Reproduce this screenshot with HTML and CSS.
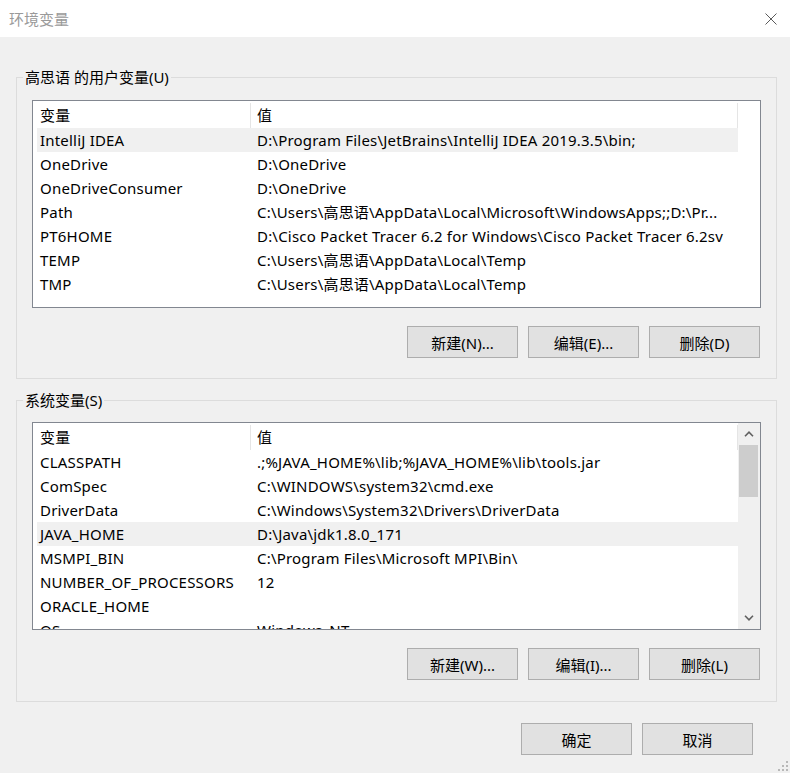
FILE: index.html
```html
<!DOCTYPE html>
<html lang="zh-CN">
<head>
    <meta charset="UTF-8">
    <meta name="viewport" content="width=device-width, initial-scale=1.0">
    <title>环境变量</title>
    <link rel="stylesheet" href="styles.css">
</head>
<body>
    <div class="dialog">
        <div class="titlebar">
            <span class="title">环境变量</span>
            <span class="close">
                <svg width="12" height="12" viewBox="0 0 12 12"><path d="M0.5 0.5L11.5 11.5M11.5 0.5L0.5 11.5" stroke="#5a5a5a" stroke-width="1" fill="none"/></svg>
            </span>
        </div>

        <div class="content">
            <fieldset class="group">
                <legend>高思语 的用户变量(U)</legend>
                <div class="list">
                    <div class="cols">
                        <div class="head"><div>变量</div><div>值</div></div>
                        <div class="row selected"><div>IntelliJ IDEA</div><div>D:\Program Files\JetBrains\IntelliJ IDEA 2019.3.5\bin;</div></div>
                        <div class="row"><div>OneDrive</div><div>D:\OneDrive</div></div>
                        <div class="row"><div>OneDriveConsumer</div><div>D:\OneDrive</div></div>
                        <div class="row"><div>Path</div><div>C:\Users\高思语\AppData\Local\Microsoft\WindowsApps;;D:\Pr...</div></div>
                        <div class="row"><div>PT6HOME</div><div>D:\Cisco Packet Tracer 6.2 for Windows\Cisco Packet Tracer 6.2sv</div></div>
                        <div class="row"><div>TEMP</div><div>C:\Users\高思语\AppData\Local\Temp</div></div>
                        <div class="row"><div>TMP</div><div>C:\Users\高思语\AppData\Local\Temp</div></div>
                    </div>
                </div>
                <div class="buttons">
                    <button>新建(N)...</button>
                    <button>编辑(E)...</button>
                    <button>删除(D)</button>
                </div>
            </fieldset>

            <fieldset class="group second">
                <legend>系统变量(S)</legend>
                <div class="list">
                    <div class="cols">
                        <div class="head"><div>变量</div><div>值</div></div>
                        <div class="row"><div>CLASSPATH</div><div>.;%JAVA_HOME%\lib;%JAVA_HOME%\lib\tools.jar</div></div>
                        <div class="row"><div>ComSpec</div><div>C:\WINDOWS\system32\cmd.exe</div></div>
                        <div class="row"><div>DriverData</div><div>C:\Windows\System32\Drivers\DriverData</div></div>
                        <div class="row selected"><div>JAVA_HOME</div><div>D:\Java\jdk1.8.0_171</div></div>
                        <div class="row"><div>MSMPI_BIN</div><div>C:\Program Files\Microsoft MPI\Bin\</div></div>
                        <div class="row"><div>NUMBER_OF_PROCESSORS</div><div>12</div></div>
                        <div class="row"><div>ORACLE_HOME</div><div></div></div>
                        <div class="row"><div>OS</div><div>Windows_NT</div></div>
                    </div>
                    <div class="scrollbar">
                        <div class="arrow">
                            <svg width="10" height="6" viewBox="0 0 10 6"><path d="M1 5.2L5 1.2L9 5.2" stroke="#606060" stroke-width="1.6" fill="none"/></svg>
                        </div>
                        <div class="track"><div class="thumb"></div></div>
                        <div class="arrow">
                            <svg width="10" height="6" viewBox="0 0 10 6"><path d="M1 0.8L5 4.8L9 0.8" stroke="#606060" stroke-width="1.6" fill="none"/></svg>
                        </div>
                    </div>
                </div>
                <div class="buttons">
                    <button>新建(W)...</button>
                    <button>编辑(I)...</button>
                    <button>删除(L)</button>
                </div>
            </fieldset>

            <div class="footer">
                <button>确定</button>
                <button>取消</button>
            </div>
        </div>

        <svg class="grip" width="12" height="12" viewBox="0 0 12 12">
            <rect x="9" y="1" width="2" height="2" fill="#b8b8b8"/>
            <rect x="5" y="5" width="2" height="2" fill="#b8b8b8"/>
            <rect x="9" y="5" width="2" height="2" fill="#b8b8b8"/>
            <rect x="1" y="9" width="2" height="2" fill="#b8b8b8"/>
            <rect x="5" y="9" width="2" height="2" fill="#b8b8b8"/>
            <rect x="9" y="9" width="2" height="2" fill="#b8b8b8"/>
        </svg>
    </div>
</body>
</html>
```

FILE: styles.css
```css
* {
    box-sizing: border-box;
}
body {
    margin: 0;
    background: #f0f0f0;
    font-family: "Noto Sans", "Noto Sans CJK SC", sans-serif;
    font-size: 15px;
    color: #000;
}
.dialog {
    position: relative;
    width: 790px;
    height: 773px;
    overflow: hidden;
}
.titlebar {
    height: 37px;
    background: #fff;
    display: flex;
    align-items: center;
    justify-content: space-between;
    padding-left: 9px;
}
.title {
    color: #9a9a9a;
    line-height: 20px;
}
.close {
    width: 38px;
    height: 37px;
    display: flex;
    align-items: center;
    justify-content: center;
}
.content {
    padding: 30px 13px 0 16px;
}
.group {
    margin: 0;
    border: 1px solid #dcdcdc;
    padding: 13px 15px 20px 15px;
}
.group.second {
    margin-top: 11px;
    padding-top: 12px;
    padding-bottom: 21px;
}
.group legend {
    margin-left: -9px;
    padding: 0 2px;
    line-height: 20px;
    height: 20px;
}
.list {
    display: flex;
    height: 208px;
    background: #fff;
    border: 1px solid #828790;
    overflow: hidden;
    letter-spacing: 0.2px;
}
.cols {
    width: 705px;
    flex: none;
}
.head {
    display: grid;
    grid-template-columns: 218px 487px;
    height: 27px;
}
.head div {
    margin-top: 2px;
    height: 25px;
    line-height: 25px;
    border-right: 1px solid #e5e5e5;
    padding-left: 7px;
}
.head div + div {
    padding-left: 6px;
}
.row {
    display: grid;
    grid-template-columns: 214px 487px;
    margin-left: 4px;
    height: 24px;
    line-height: 24px;
}
.row div {
    white-space: nowrap;
    overflow: hidden;
    padding-left: 3px;
}
.row div + div {
    padding-left: 6px;
}
.row.selected {
    background: #f0f0f0;
}
.scrollbar {
    width: 22px;
    flex: none;
    background: #f0f0f0;
    display: flex;
    flex-direction: column;
}
.arrow {
    height: 22px;
    display: flex;
    align-items: center;
    justify-content: center;
}
.track {
    flex: 1;
    padding: 0 2px 0 1px;
}
.thumb {
    height: 52px;
    background: #cdcdcd;
}
.buttons {
    display: flex;
    justify-content: flex-end;
    gap: 10px;
    margin-top: 18px;
    padding-right: 1px;
}
button {
    width: 111px;
    height: 32px;
    background: #e1e1e1;
    border: 1px solid #adadad;
    border-radius: 0;
    font-family: inherit;
    font-size: 15px;
    color: #000;
    padding: 0;
}
.footer {
    display: flex;
    justify-content: flex-end;
    gap: 10px;
    margin-top: 21px;
    padding-right: 24px;
}
.grip {
    position: absolute;
    right: 1px;
    bottom: 1px;
}
```
